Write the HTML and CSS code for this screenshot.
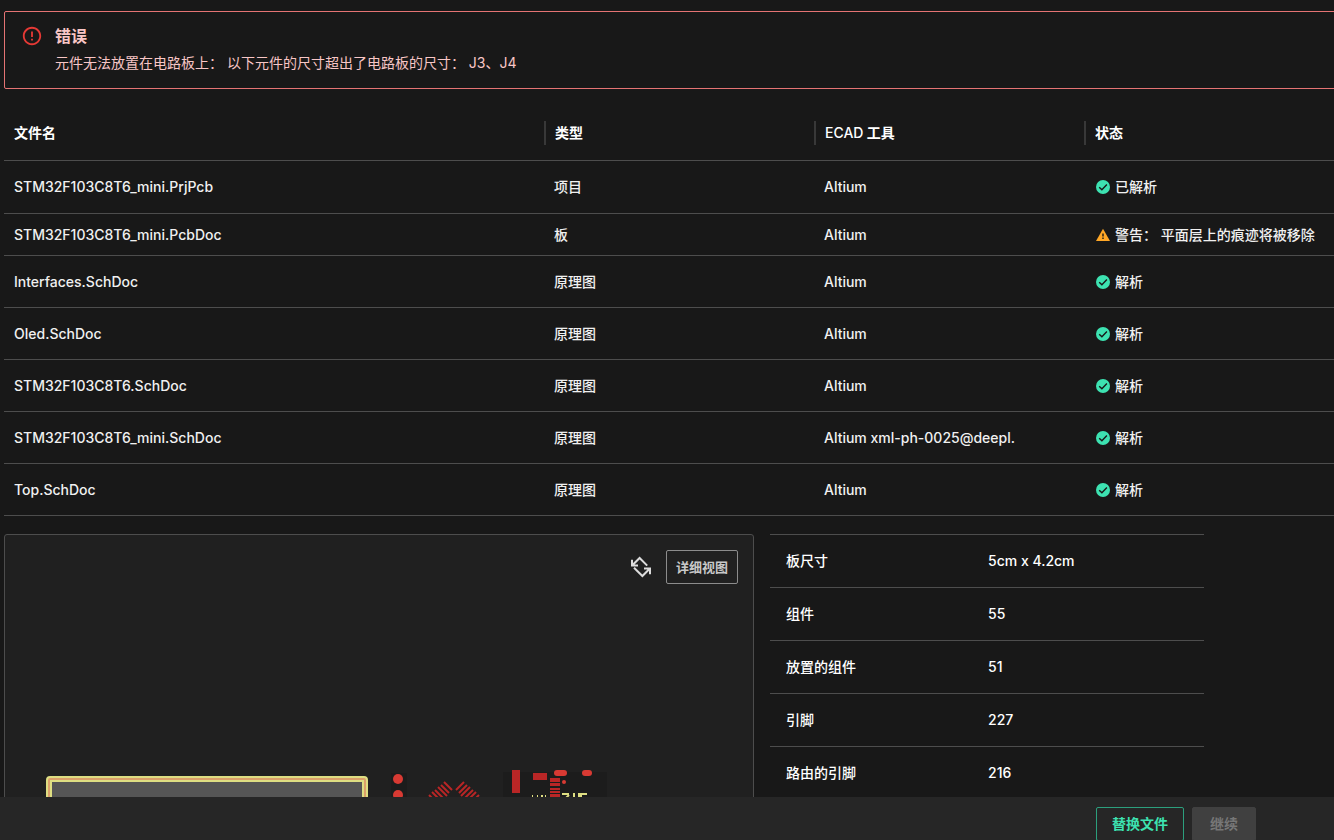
FILE: index.html
```
<!DOCTYPE html>
<html lang="zh-CN">
<head>
  <meta charset="UTF-8">
  <meta name="viewport" content="width=device-width, initial-scale=1.0">
  <title>STM32F103C8T6_mini</title>
  <link rel="stylesheet" href="styles.css">
</head>
<body>
  <!-- Shared icons -->
  <svg class="sprite" aria-hidden="true">
    <symbol id="icon-check" viewBox="0 0 14 14">
      <circle cx="7" cy="7" r="7" fill="#3de2b1"/>
      <path d="M3.2 7.2 5.9 9.8l5-5.2" fill="none" stroke="#181818" stroke-width="1.4"/>
    </symbol>
    <symbol id="icon-warning" viewBox="0 0 14 14">
      <path d="M7 .8 14 13H0z" fill="#ffa726"/>
      <path d="M6.3 5.6h1.4v2.8H6.3zM6.3 9.6h1.4V11H6.3z" fill="#181818"/>
    </symbol>
  </svg>

  <main class="content">
    <section class="alert" role="alert">
      <svg class="alert-icon" viewBox="0 0 24 24" aria-hidden="true">
        <path fill="#e53935" d="M11 15h2v2h-2zm0-8h2v6h-2zm.99-5C6.47 2 2 6.48 2 12s4.47 10 9.99 10C17.52 22 22 17.52 22 12S17.52 2 11.99 2zM12 20c-4.42 0-8-3.58-8-8s3.58-8 8-8 8 3.58 8 8-3.58 8-8 8z"/>
      </svg>
      <div>
        <h1 class="alert-title">错误</h1>
        <p class="alert-text">元件无法放置在电路板上： 以下元件的尺寸超出了电路板的尺寸： J3、J4</p>
      </div>
    </section>

    <table class="files">
      <thead>
        <tr>
          <th class="col-name"><span class="head">文件名</span></th>
          <th><span class="head">类型</span></th>
          <th><span class="head"><span class="latin">ECAD</span> 工具</span></th>
          <th><span class="head">状态</span></th>
        </tr>
      </thead>
      <tbody>
        <tr class="project">
          <td>STM32F103C8T6_mini.PrjPcb</td>
          <td>项目</td>
          <td>Altium</td>
          <td><span class="status"><svg class="icon"><use href="#icon-check"/></svg>已解析</span></td>
        </tr>
        <tr class="compact">
          <td>STM32F103C8T6_mini.PcbDoc</td>
          <td>板</td>
          <td>Altium</td>
          <td><span class="status"><svg class="icon"><use href="#icon-warning"/></svg>警告： 平面层上的痕迹将被移除</span></td>
        </tr>
        <tr>
          <td>Interfaces.SchDoc</td>
          <td>原理图</td>
          <td>Altium</td>
          <td><span class="status"><svg class="icon"><use href="#icon-check"/></svg>解析</span></td>
        </tr>
        <tr>
          <td>Oled.SchDoc</td>
          <td>原理图</td>
          <td>Altium</td>
          <td><span class="status"><svg class="icon"><use href="#icon-check"/></svg>解析</span></td>
        </tr>
        <tr>
          <td>STM32F103C8T6.SchDoc</td>
          <td>原理图</td>
          <td>Altium</td>
          <td><span class="status"><svg class="icon"><use href="#icon-check"/></svg>解析</span></td>
        </tr>
        <tr>
          <td>STM32F103C8T6_mini.SchDoc</td>
          <td>原理图</td>
          <td>Altium xml-ph-0025@deepl.</td>
          <td><span class="status"><svg class="icon"><use href="#icon-check"/></svg>解析</span></td>
        </tr>
        <tr>
          <td>Top.SchDoc</td>
          <td>原理图</td>
          <td>Altium</td>
          <td><span class="status"><svg class="icon"><use href="#icon-check"/></svg>解析</span></td>
        </tr>
      </tbody>
    </table>

    <div class="summary">
      <section class="preview">
        <div class="preview-tools">
          <button type="button" class="btn-icon" aria-label="旋转">
            <svg viewBox="0 0 24 24" width="24" height="24" fill="none" stroke="#dcdcdc" stroke-width="2" aria-hidden="true">
              <path d="M18.2 10.6 10.6 3 3.6 10M3 4.8v5.8h6"/>
              <path d="M5 12.8l8.4 8.2 7-7M21 19.2v-5.8h-6"/>
            </svg>
          </button>
          <button type="button" class="btn btn-detail">详细视图</button>
        </div>
        <!-- Board drawing, only its top edge shows above the footer -->
        <svg class="board" viewBox="0 0 570 60" aria-hidden="true">
          <rect x="3" y="9" width="316" height="80" rx="1" fill="#555" stroke="#dede82" stroke-width="6"/>
          <rect x="3" y="9" width="316" height="80" rx="1" fill="none" stroke="#dba06a" stroke-width="2"/>
          <g fill="#1c1c1c">
            <rect x="345" y="3" width="16" height="57"/>
            <rect x="457" y="2" width="104" height="58"/>
          </g>
          <g fill="#d83a33">
            <circle cx="352" cy="9" r="5"/>
            <circle cx="352" cy="25" r="5"/>
            <rect x="508" y="0" width="13" height="6" rx="3"/>
            <rect x="536" y="0" width="10" height="6" rx="3"/>
            <circle cx="518" cy="12" r="2"/>
          </g>
          <g fill="#b92626">
            <rect x="466" y="0" width="8" height="23"/>
            <rect x="487" y="3" width="14" height="7"/>
            <rect x="504" y="8" width="10" height="4"/>
            <rect x="504" y="13" width="10" height="3"/>
            <rect x="504" y="18" width="10" height="2"/>
            <rect x="504" y="21" width="10" height="2"/>
            <rect x="504" y="24" width="10" height="3"/>
          </g>
          <g stroke="#b92626" stroke-width="2">
            <path d="M398 12l8 8M395 15l8 8M392 17l9 9M389 20l9 9M386 22l9 9M383 25l9 9"/>
            <path d="M418 12l-8 8M421 15l-8 8M424 17l-9 9M427 20l-9 9M430 22l-9 9M433 25l-9 9"/>
          </g>
          <path d="M516 24h7M523 25l-3 3M528 23v5M533 23v5M541 24h-6v4M486 26h1M491 26h1M495 26h2M499 26h1" fill="none" stroke="#dede82" stroke-width="2"/>
        </svg>
      </section>

      <dl class="stats">
        <div class="stat"><dt>板尺寸</dt><dd>5cm x 4.2cm</dd></div>
        <div class="stat"><dt>组件</dt><dd>55</dd></div>
        <div class="stat"><dt>放置的组件</dt><dd>51</dd></div>
        <div class="stat"><dt>引脚</dt><dd>227</dd></div>
        <div class="stat"><dt>路由的引脚</dt><dd>216</dd></div>
      </dl>
    </div>
  </main>

  <footer class="footer">
    <button type="button" class="btn btn-replace">替换文件</button>
    <button type="button" class="btn btn-next" disabled>继续</button>
  </footer>
</body>
</html>
```
FILE: styles.css
```
* {
  box-sizing: border-box;
}
body {
  font-family: Inter, "Noto Sans CJK SC", sans-serif;
  font-size: 14px;
  line-height: 20px;
  font-weight: 500;
  background: #181818;
  color: #f0f0f0;
  margin: 0;
  height: 100vh;
  display: flex;
  flex-direction: column;
  overflow: hidden;
}
.sprite {
  display: none;
}
.content {
  flex: 1;
  min-height: 0;
  overflow: hidden;
  padding: 11px 0 0 4px;
  /* content runs under the right edge of the window */
  margin-right: -20px;
}

/* Error message */
.alert {
  display: flex;
  gap: 12px;
  padding: 13px 16px 15px;
  border: 1px solid #e57373;
  border-radius: 2px;
  color: #f8c6c6;
}
.alert-icon {
  width: 22px;
  height: 22px;
}
.alert-title {
  font-size: 16px;
  line-height: 22px;
  font-weight: 700;
  margin: 0 0 6px;
}
.alert-text {
  font-weight: 400;
  margin: 0;
}

/* File table */
.files {
  width: 100%;
  table-layout: fixed;
  border-collapse: separate;
  border-spacing: 0;
  margin-top: 16px;
}
.files th,
.files td {
  height: 52px;
  padding: 0 10px;
  border-bottom: 1px solid #4d4d4d;
  text-align: left;
  white-space: nowrap;
}
.files th {
  height: 56px;
  padding: 0;
  color: #fff;
}
.files .project td {
  height: 53px;
}
.files .compact td {
  height: 42px;
}
.files td:last-child {
  padding-left: 12px;
}
.col-name {
  width: 40%;
}
.head {
  display: block;
  padding: 2px 9px;
  border-left: 2px solid #383838;
  font-weight: 700;
}
.col-name .head {
  border-left-color: transparent;
  padding-left: 8px;
}
.latin {
  font-weight: 500;
}
.status {
  display: flex;
  align-items: center;
  gap: 5px;
}
.icon {
  width: 14px;
  height: 14px;
  flex: none;
}

/* Board preview and numbers */
.summary {
  display: grid;
  grid-template-columns: 750fr 434fr;
  gap: 16px;
  max-width: 1200px;
  margin-top: 18px;
}
.preview {
  display: flex;
  flex-direction: column;
  background: #202020;
  border: 1px solid #4d4d4d;
  border-radius: 3px;
  padding: 15px 15px 0 41px;
}
.preview-tools {
  display: flex;
  justify-content: flex-end;
  align-items: center;
  gap: 13px;
}
.board {
  display: block;
  width: 570px;
  height: 60px;
  margin-top: 186px;
}
.stats {
  margin: 0;
  border-top: 1px solid #4d4d4d;
  color: #fff;
}
.stat {
  display: grid;
  grid-template-columns: 202px 1fr;
  padding: 16px;
  border-bottom: 1px solid #4d4d4d;
}
.stat dd {
  margin: 0;
}

/* Buttons */
.btn {
  font: inherit;
  font-weight: 700;
  height: 34px;
  padding: 0 15px;
  border: 1px solid;
  border-radius: 2px;
  background: transparent;
  cursor: pointer;
}
.btn-icon {
  display: flex;
  padding: 0;
  border: none;
  background: none;
  cursor: pointer;
}
.btn-detail {
  font-size: 13px;
  padding: 0 9px;
  border-color: #8c8c8c;
  color: #c8c8c8;
}
.btn-replace {
  border-color: #2c9f7d;
  color: #3de2b1;
}
.btn-next {
  padding: 0 17px;
  border-color: #404040;
  background: #404040;
  color: #777;
  cursor: default;
}
.footer {
  flex: none;
  display: flex;
  justify-content: flex-end;
  gap: 8px;
  height: 43px;
  padding: 10px 78px 0 16px;
  background: #262626;
  overflow: hidden;
}
```
